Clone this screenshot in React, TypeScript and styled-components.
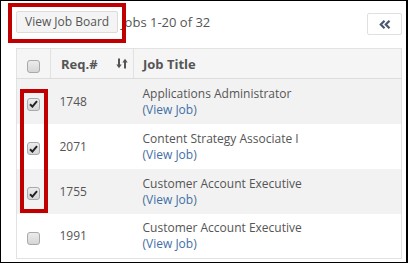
import React from "react";
import styled, { createGlobalStyle } from "styled-components";

const Global = createGlobalStyle`
  html, body { margin: 0; padding: 0; background: #fff; }
  body { font-family: "Open Sans", "Liberation Sans", sans-serif; }
`;

const Frame = styled.div`
  position: relative;
  box-sizing: border-box;
  width: 408px;
  height: 263px;
  border-style: solid;
  border-color: #000;
  border-width: 1px 2px 1px 1px;
  padding: 0 4px 0 15px;
  overflow: hidden;
  background: #fff;
  color: #555;
`;

const Toolbar = styled.div`
  display: flex;
  align-items: flex-start;
  height: 47px;
  padding-top: 10px;
  box-sizing: border-box;
`;

const Button = styled.button`
  box-sizing: border-box;
  height: 22px;
  padding: 0 8px;
  font-family: "Open Sans", "Liberation Sans", sans-serif;
  font-size: 12px;
  color: #555;
  background: #f4f4f4;
  border: 1px solid #dcdcdc;
  border-radius: 2px;
  line-height: 20px;
`;

const Summary = styled.span`
  margin-left: 3px;
  font-size: 13px;
  line-height: 22px;
  color: #555;
`;

const Pager = styled.button`
  margin-left: auto;
  margin-top: 2px;
  box-sizing: border-box;
  width: 35px;
  height: 22px;
  background: #fff;
  border: 1px solid #e0e0e0;
  border-radius: 2px;
  display: flex;
  align-items: center;
  justify-content: center;
  padding: 0;
`;

const Table = styled.table`
  width: 386px;
  border-collapse: collapse;
  table-layout: fixed;
  font-size: 12px;
  border: 1px solid #e2e2e2;
`;

const HeadRow = styled.tr`
  height: 30px;
`;

const Th = styled.th<{ $w?: number; $last?: boolean; $pad?: string }>`
  box-sizing: border-box;
  ${(p) => (p.$w ? `width: ${p.$w}px;` : "")}
  padding: ${(p) => p.$pad ?? "0 9px"};
  text-align: left;
  font-size: 13px;
  font-weight: 700;
  color: #555;
  background: #f5f5f6;
  border-right: ${(p) => (p.$last ? "none" : "1px solid #e2e2e2")};
  border-bottom: 1px solid #dcdcdc;
  vertical-align: middle;
`;

const HeadInner = styled.div`
  display: flex;
  align-items: center;
  justify-content: space-between;
`;

const Tr = styled.tr<{ $odd: boolean }>`
  height: 45px;
  background: ${(p) => (p.$odd ? "#f2f2f2" : "#fff")};
  & + & td { border-top: 1px solid #dedede; }
`;

const Td = styled.td`
  padding: 1px 9px 0;
  vertical-align: middle;
  color: #555;
  line-height: 16px;
  text-align: left;
`;

const CheckCell = styled.td`
  padding: 3px 0 0;
  vertical-align: middle;
  text-align: center;
`;

const Box = styled.span`
  display: inline-flex;
  align-items: center;
  justify-content: center;
  box-sizing: border-box;
  width: 13px;
  height: 13px;
  border: 1px solid #a9a9a9;
  border-radius: 3px;
  background: linear-gradient(#ececec, #d6d6d6);
  vertical-align: middle;
`;

const Link = styled.a`
  color: #3f6fa6;
  text-decoration: none;
`;

const Paren = styled.span`
  color: #4d6a90;
`;

const Highlight = styled.div`
  position: absolute;
  box-sizing: border-box;
  border: 4px solid #c00000;
`;

const Check = ({ checked }: { checked?: boolean }) => (
  <Box>
    {checked && (
      <svg width="9" height="8" viewBox="0 0 9 8">
        <path d="M1 4.3 L3.4 6.6 L8 1.2" fill="none" stroke="#222" strokeWidth="2" />
      </svg>
    )}
  </Box>
);

const rows = [
  { id: "1748", title: "Applications Administrator", checked: true },
  { id: "2071", title: "Content Strategy Associate I", checked: true },
  { id: "1755", title: "Customer Account Executive", checked: true },
  { id: "1991", title: "Customer Account Executive", checked: false },
];

export default function App() {
  return (
    <>
      <Global />
      <Frame>
        <Toolbar>
          <Button>View Job Board</Button>
          <Summary>Jobs 1-20 of 32</Summary>
          <Pager aria-label="first page">
            <svg width="12" height="9" viewBox="0 0 12 9">
              <path d="M5.5 0.8 L1.8 4.5 L5.5 8.2" fill="none" stroke="#4a5873" strokeWidth="2.2" />
              <path d="M10.5 0.8 L6.8 4.5 L10.5 8.2" fill="none" stroke="#4a5873" strokeWidth="2.2" />
            </svg>
          </Pager>
        </Toolbar>
        <Table>
          <thead>
            <HeadRow>
              <Th $w={34} $pad="3px 0 0" style={{ textAlign: "center" }}>
                <Check />
              </Th>
              <Th $w={83} $pad="0 5px 0 10px">
                <HeadInner>
                  <span>Req.#</span>
                  <svg width="12" height="11" viewBox="0 0 12 11">
                    <path d="M3 0.5 V9" stroke="#555" strokeWidth="2" />
                    <path d="M0.3 6.5 L3 10.2 L5.7 6.5 Z" fill="#555" />
                    <path d="M9 10.5 V2" stroke="#555" strokeWidth="2" />
                    <path d="M6.3 4.5 L9 0.8 L11.7 4.5 Z" fill="#555" />
                  </svg>
                </HeadInner>
              </Th>
              <Th $last>Job Title</Th>
            </HeadRow>
          </thead>
          <tbody>
            {rows.map((r, i) => (
              <Tr key={i} $odd={i % 2 === 0}>
                <CheckCell>
                  <Check checked={r.checked} />
                </CheckCell>
                <Td>{r.id}</Td>
                <Td>
                  <div>{r.title}</div>
                  <div>
                    <Paren>(</Paren>
                    <Link href="#">View Job</Link>
                    <Paren>)</Paren>
                  </div>
                </Td>
              </Tr>
            ))}
          </tbody>
        </Table>
        <Highlight style={{ left: 7, top: 2, width: 118, height: 40 }} />
        <Highlight style={{ left: 19, top: 88, width: 28, height: 124 }} />
      </Frame>
    </>
  );
}
